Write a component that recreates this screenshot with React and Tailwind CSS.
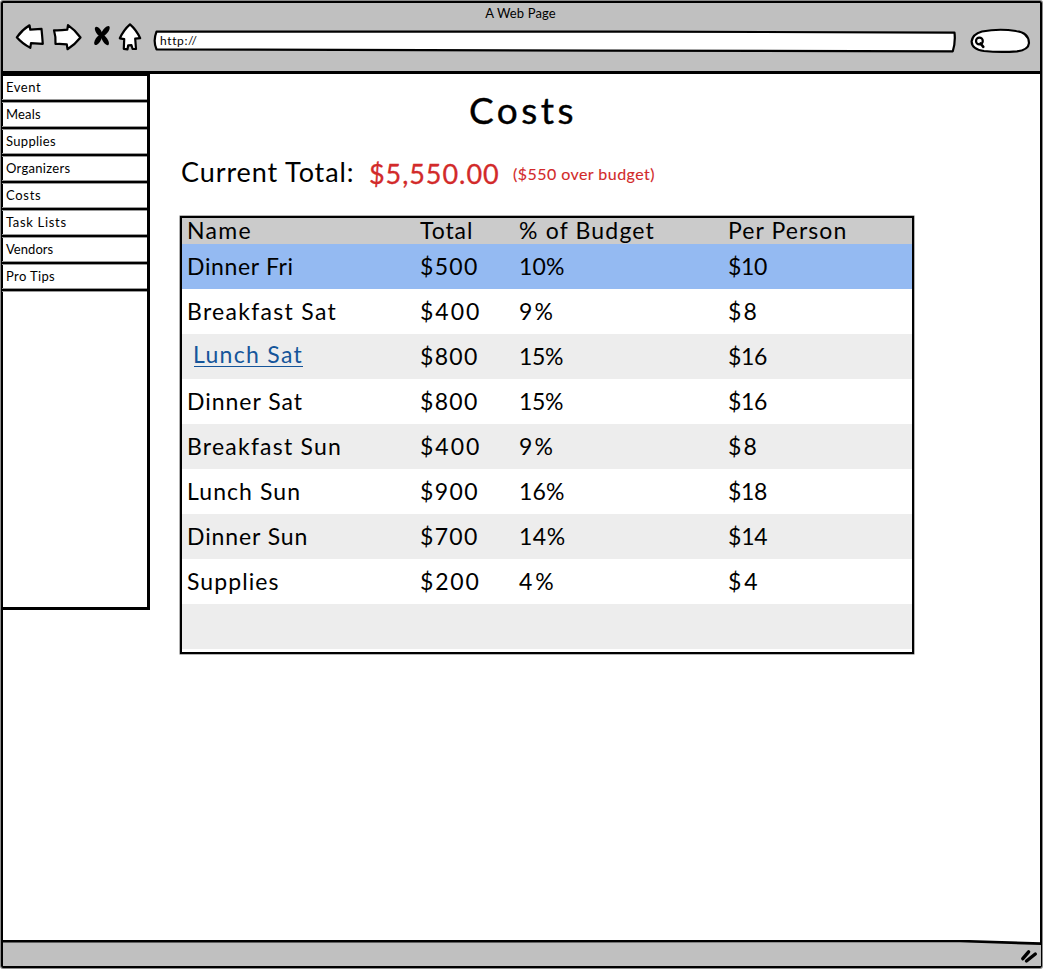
import React from "react";

const menu = [
  ["Event", "tracking-[0.56px]"],
  ["Meals", "tracking-[0.18px]"],
  ["Supplies", "tracking-[0.31px]"],
  ["Organizers", "tracking-[0.3px]"],
  ["Costs", "tracking-[0.7px]"],
  ["Task Lists", "tracking-[0.68px]"],
  ["Vendors", "tracking-[0.04px]"],
  ["Pro Tips", "tracking-[0.37px]"],
];

const columns = [
  ["Name", "tracking-[1.3px]"],
  ["Total", "tracking-[0.9px]"],
  ["% of Budget", "tracking-[1.18px]"],
  ["Per Person", "tracking-[1.08px]"],
];

const rows = [
  [["Dinner Fri", "tracking-[0.65px]"], ["$500", "tracking-[1.3px]"], ["10%", "tracking-[0.2px]"], ["$10", "tracking-[-0.4px]"]],
  [["Breakfast Sat", "tracking-[1.3px]"], ["$400", "tracking-[2px]"], ["9%", "tracking-[2.2px]"], ["$8", "tracking-[2.2px]"]],
  [["Lunch Sat", "tracking-[1.36px]"], ["$800", "tracking-[1.3px]"], ["15%", "tracking-[-0.3px]"], ["$16", "tracking-[-0.4px]"]],
  [["Dinner Sat", "tracking-[0.98px]"], ["$800", "tracking-[1.3px]"], ["15%", "tracking-[-0.3px]"], ["$16", "tracking-[-0.4px]"]],
  [["Breakfast Sun", "tracking-[1.22px]"], ["$400", "tracking-[2px]"], ["9%", "tracking-[2.2px]"], ["$8", "tracking-[2.2px]"]],
  [["Lunch Sun", "tracking-[1.08px]"], ["$900", "tracking-[1.4px]"], ["16%", "tracking-[0.2px]"], ["$18", "tracking-[-0.4px]"]],
  [["Dinner Sun", "tracking-[0.9px]"], ["$700", "tracking-[1.3px]"], ["14%", "tracking-[0.5px]"], ["$14", "tracking-[-0.2px]"]],
  [["Supplies", "tracking-[1.08px]"], ["$200", "tracking-[1.8px]"], ["4%", "tracking-[3px]"], ["$4", "tracking-[3px]"]],
  [["", ""], ["", ""], ["", ""], ["", ""]],
];

const grid = "grid grid-cols-[233px_99px_209px_1fr] items-center pl-[5px] text-[23px]";

function NavIcons() {
  return (
    <svg width="130" height="34" viewBox="14 20 130 34" fill="white" stroke="black" strokeWidth="2.2" strokeLinejoin="round" strokeLinecap="round">
      <path d="M16.8 37.3 Q22 30 29.5 25.3 L30.3 29.7 L41.5 28.8 Q42.2 36 42.8 43.8 L31 43.2 L30.3 47.8 Q22 43.5 16.8 37.3Z" />
      <path d="M54 30.3 Q60 30.6 67.3 29.7 L68 25.2 Q75 30 80.5 37.5 Q75 44.5 67.5 49.2 L66.8 44.3 Q60 43.5 55.5 44 Q56 37 54 30.3Z" />
      <g fill="black" stroke="none">
        <ellipse cx="98.6" cy="31.6" rx="2.7" ry="5.6" transform="rotate(-33 98.6 31.6)" />
        <ellipse cx="105.4" cy="31.2" rx="2.6" ry="6.2" transform="rotate(38 105.4 31.2)" />
        <ellipse cx="98" cy="40" rx="2.6" ry="5.8" transform="rotate(33 98 40)" />
        <ellipse cx="105" cy="39.8" rx="2.5" ry="6.2" transform="rotate(-33 105 39.8)" />
        <circle cx="101.6" cy="35.7" r="2.6" />
      </g>
      <path d="M130 24.3 Q136.5 30 140.2 38.2 L135.2 38.6 L136 49 L132.6 49 L131.5 45.2 L128.2 45.3 L127.5 49.3 L123.8 48.8 L124.2 39.2 L119.8 38.3 Q123.5 30 130 24.3Z" />
    </svg>
  );
}

export default function App() {
  return (
    <div className="relative flex h-[969px] w-[1043px] flex-col bg-white pl-px pt-px font-['Lato',sans-serif] text-black">
      <div className="flex h-[967px] w-[1041px] flex-col rounded-[2px] border-2 border-black shadow-[0_0_0_1px_rgba(0,0,0,0.45)]">
        <header className="h-[71px] shrink-0 border-b-[3px] border-black bg-[#c0c0c0]">
          <div className="h-[21px] pr-[2px] text-center text-[13px] leading-[21px] tracking-[0.12px]">A Web Page</div>
          <div className="-mt-[4px] flex h-[34px] items-start pl-[11px]">
            <NavIcons />
            <div className="relative ml-[9px] mt-[9px] h-[24px] w-[804px] shrink-0">
              <svg className="absolute inset-0" width="804" height="24" viewBox="153 29 804 24" fill="white" stroke="black" strokeWidth="2.2">
                <path d="M156.5 31.6 Q400 31 640 31.6 Q800 32 954.5 32.6 Q955.6 42 952.8 51.3 Q800 51.3 600 50.6 Q380 49.2 156.5 49.3 Q152.8 41 156.5 31.6Z" strokeLinejoin="round" />
              </svg>
              <span className="relative ml-[7px] block pt-px text-[12px] leading-[21px] tracking-[0.62px] [font-variant-ligatures:none]">http://</span>
            </div>
            <svg className="ml-[13px] mt-[8px] shrink-0" width="62" height="26" viewBox="970 28 62 26" fill="white" stroke="black" strokeWidth="2.2" strokeLinecap="round">
              <path d="M982 31.5 Q999 28.3 1016 31 Q1028.6 32.5 1029 43 Q1028.5 50 1017 51.3 Q1000 52.6 984 51 Q972 49.5 971.6 41.5 Q972.5 34 982 31.5Z" />
              <circle cx="979.4" cy="41" r="3.4" strokeWidth="2.2" />
              <path d="M980.5 43.5 L983.3 46.8" strokeWidth="2.6" />
            </svg>
          </div>
        </header>

        <div className="flex min-h-0 flex-1">
          <aside className="-ml-[1px] flex h-[536px] w-[148px] shrink-0 flex-col border-b-[3px] border-r-[3px] border-t-2 border-black">
            {menu.map(([label, tracking]) => (
              <div key={label} className="flex h-[27px] shrink-0 flex-col">
                <div className={`h-[24px] border-b border-[#999] pl-[4px] text-[13px] leading-[23px] ${tracking}`}>{label}</div>
                <div className="h-[2px] bg-black" />
                <div className="h-px bg-[#999]" />
              </div>
            ))}
          </aside>

          <main className="flex flex-1 flex-col pl-[30px]">
            <h1 className="ml-[289px] mt-[11px] text-[37px] leading-[50px] tracking-[3.5px] [-webkit-text-stroke:0.4px_black]">Costs</h1>
            <div className="mt-[14px] flex h-[50px] items-center pl-px">
              <span className="w-[188px] pb-[4px] text-[27px] leading-[46px] tracking-[0.9px]">Current Total:</span>
              <span className="w-[144px] text-[27px] leading-[50px] tracking-[0.94px] text-[#d22a2a] [-webkit-text-stroke:0.3px_#d22a2a]">$5,550.00</span>
              <span className="text-[16px] leading-[50px] tracking-[0.45px] text-[#d22a2a] [-webkit-text-stroke:0.1px_#d22a2a]">($550 over budget)</span>
            </div>
            <div className="mt-[17px] h-[438px] w-[734px] border-2 border-black shadow-[0_0_0_0.5px_rgba(0,0,0,0.6)]">
              <div className={`${grid} h-[26px] bg-[#cbcbcb]`}>
                {columns.map(([label, tracking]) => (
                  <span key={label} className={`leading-[24px] pb-[2px] ${tracking}`}>{label}</span>
                ))}
              </div>
              {rows.map((row, i) => (
                <div key={i} className={`${grid} h-[45px] ${i === 0 ? "bg-[#94baf2]" : i % 2 === 0 ? "bg-[#ededed]" : "bg-white"}`}>
                  {row.map(([value, tracking], j) =>
                    i === 2 && j === 0 ? (
                      <a key={j} className="-mt-[5px] ml-[7px] h-[26px] w-[109px] whitespace-nowrap border-b border-[#15559a] -indent-[1px] leading-[26px] tracking-[1.3px] text-[#15559a]">
                        {value}
                      </a>
                    ) : (
                      <span key={j} className={`leading-[45px] ${tracking}`}>{value}</span>
                    )
                  )}
                </div>
              ))}
            </div>
          </main>
        </div>

        <footer className="flex h-[26px] shrink-0 items-start justify-end">
          <svg width="1038" height="26" viewBox="3 940 1038 26" className="-mr-[1px] shrink-0" stroke="black" strokeLinecap="round">
            <path d="M2 942 L960 941.5 L1042 944 V967 H2Z" fill="#c0c0c0" stroke="none" />
            <path d="M2 941.2 Q500 942.6 960 941 L1042 943.7" fill="none" strokeWidth="2.6" />
            <path d="M1022.8 958.6 L1028.6 951.8 M1026.5 961 L1035.3 954" fill="none" strokeWidth="3.4" />
          </svg>
        </footer>
      </div>
    </div>
  );
}
